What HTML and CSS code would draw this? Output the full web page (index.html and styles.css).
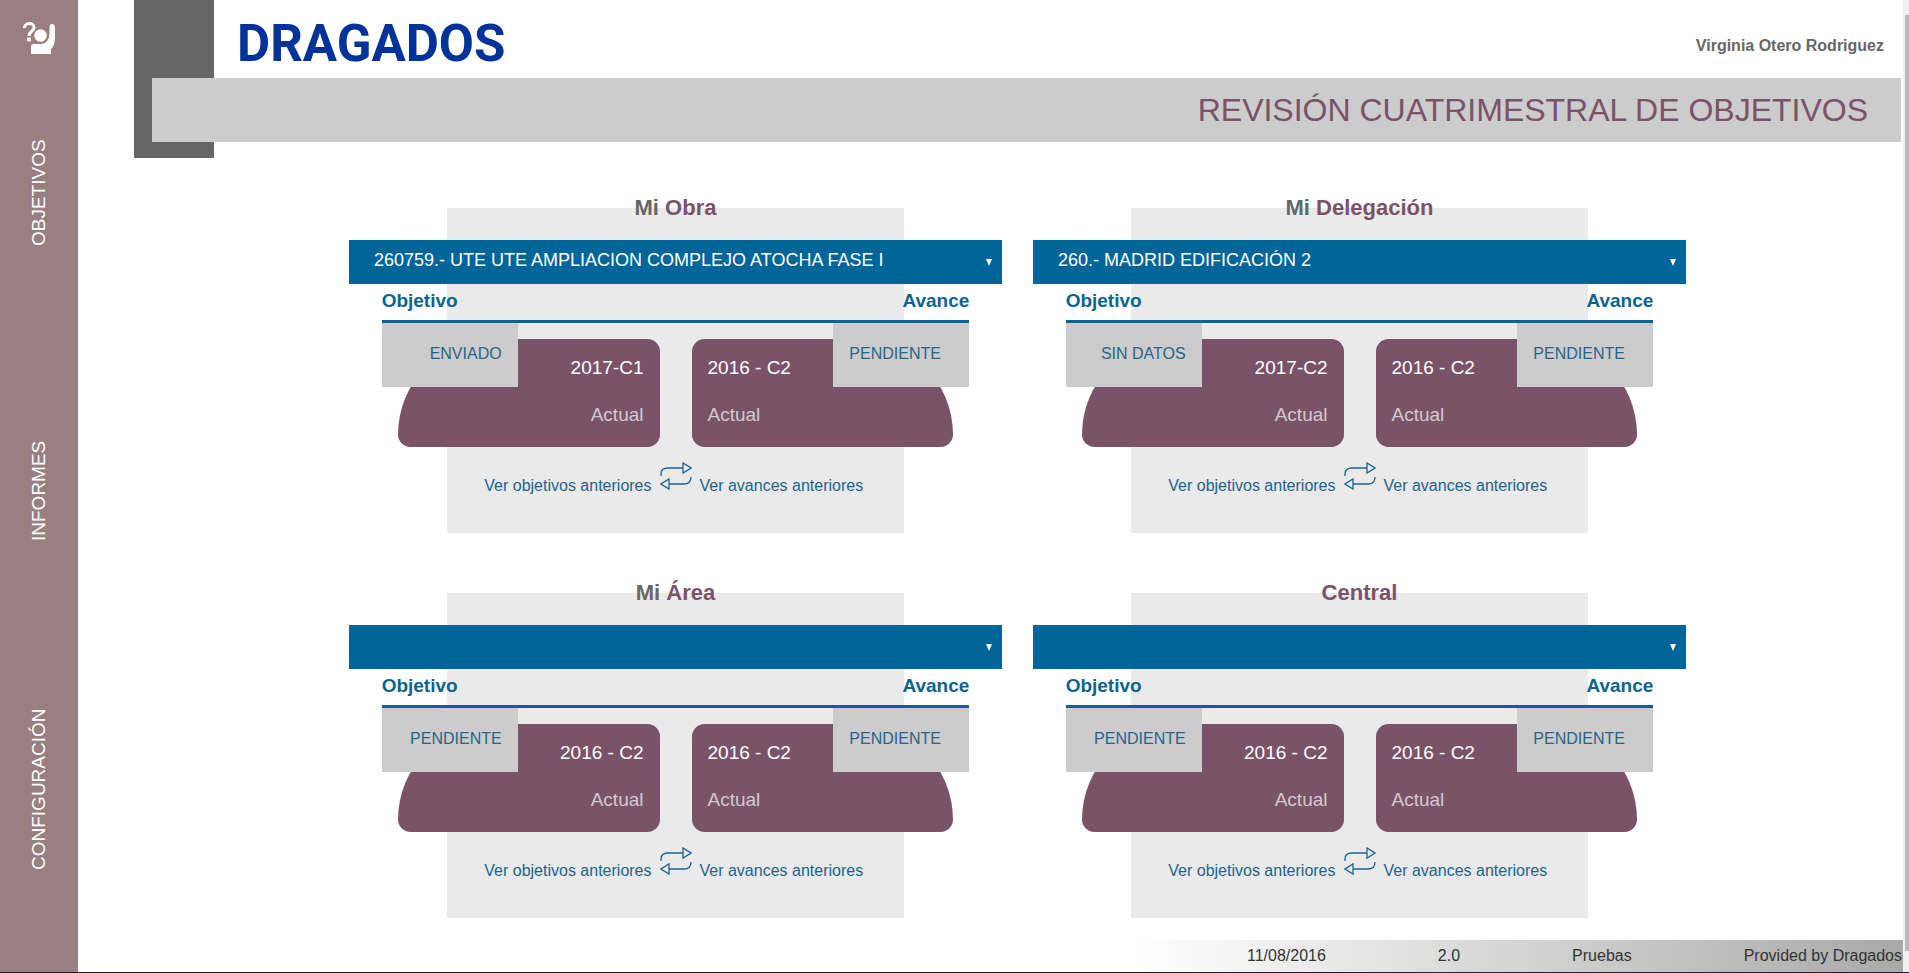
FILE: index.html
```html
<!DOCTYPE html>
<html lang="es">
<head>
<meta charset="utf-8">
<title>Revisión cuatrimestral de objetivos</title>
<link rel="stylesheet" href="styles.css">
</head>
<body>
<svg class="defs" aria-hidden="true">
  <symbol id="swap" viewBox="0 0 32 28">
    <path d="M1 14V12C1 8 4 6 8 6H23M23 1V11L31 6ZM31 15C31 19 29 22 24 22H9M9 17V27L1 22Z" fill="none" stroke="currentColor" stroke-width="1.3"/>
  </symbol>
</svg>
<div class="app">
  <nav class="sidebar">
    <button class="help" aria-label="Ayuda">
      <svg viewBox="0 0 32 32" width="32" height="32" aria-hidden="true">
        <path d="M1.500 6C1.500 0 11 0 11 5.500C11 9.500 6 9 6 14" fill="none" stroke="#fff" stroke-width="3"/>
        <rect x="4" y="15.500" width="4" height="4" rx="1" fill="#fff"/>
        <circle cx="17.500" cy="13.500" r="6.300" fill="#fff"/>
        <path d="M8 32V25Q8 22 11 22H19Q26 20 26.500 12V5Q26.500 2 29 2T32 5V17Q31 25 28 27V32Z" fill="#fff"/>
      </svg>
    </button>
    <button class="tab">OBJETIVOS</button>
    <button class="tab">INFORMES</button>
    <button class="tab">CONFIGURACIÓN</button>
  </nav>
  <div class="page">
    <header class="header">
      <div class="block"></div>
      <div class="top">
        <div class="logo">DRAGADOS</div>
        <div class="user">Virginia Otero Rodriguez</div>
      </div>
      <h1 class="banner">REVISIÓN CUATRIMESTRAL DE OBJETIVOS</h1>
    </header>
    <main class="cards">
      <section class="card">
        <h2 class="title">Mi <span class="accent">Obra</span></h2>
        <select class="picker" aria-label="Obra"><option>260759.- UTE UTE AMPLIACION COMPLEJO ATOCHA FASE I</option></select>
        <div class="heads"><span>Objetivo</span><span>Avance</span></div>
        <div class="panels">
          <div class="panel left"><div class="status">ENVIADO</div><div class="shape"><span>2017-C1</span><span class="now">Actual</span></div></div>
          <div class="panel right"><div class="status">PENDIENTE</div><div class="shape"><span>2016 - C2</span><span class="now">Actual</span></div></div>
        </div>
        <div class="links"><a href="#">Ver objetivos anteriores</a><svg class="swap" aria-hidden="true"><use href="#swap"/></svg><a href="#">Ver avances anteriores</a></div>
      </section>
      <section class="card">
        <h2 class="title">Mi <span class="accent">Delegación</span></h2>
        <select class="picker" aria-label="Delegación"><option>260.- MADRID EDIFICACIÓN 2</option></select>
        <div class="heads"><span>Objetivo</span><span>Avance</span></div>
        <div class="panels">
          <div class="panel left"><div class="status">SIN DATOS</div><div class="shape"><span>2017-C2</span><span class="now">Actual</span></div></div>
          <div class="panel right"><div class="status">PENDIENTE</div><div class="shape"><span>2016 - C2</span><span class="now">Actual</span></div></div>
        </div>
        <div class="links"><a href="#">Ver objetivos anteriores</a><svg class="swap" aria-hidden="true"><use href="#swap"/></svg><a href="#">Ver avances anteriores</a></div>
      </section>
      <section class="card">
        <h2 class="title">Mi <span class="accent">Área</span></h2>
        <select class="picker" aria-label="Área"><option></option></select>
        <div class="heads"><span>Objetivo</span><span>Avance</span></div>
        <div class="panels">
          <div class="panel left"><div class="status">PENDIENTE</div><div class="shape"><span>2016 - C2</span><span class="now">Actual</span></div></div>
          <div class="panel right"><div class="status">PENDIENTE</div><div class="shape"><span>2016 - C2</span><span class="now">Actual</span></div></div>
        </div>
        <div class="links"><a href="#">Ver objetivos anteriores</a><svg class="swap" aria-hidden="true"><use href="#swap"/></svg><a href="#">Ver avances anteriores</a></div>
      </section>
      <section class="card">
        <h2 class="title"><span class="accent">Central</span></h2>
        <select class="picker" aria-label="Central"><option></option></select>
        <div class="heads"><span>Objetivo</span><span>Avance</span></div>
        <div class="panels">
          <div class="panel left"><div class="status">PENDIENTE</div><div class="shape"><span>2016 - C2</span><span class="now">Actual</span></div></div>
          <div class="panel right"><div class="status">PENDIENTE</div><div class="shape"><span>2016 - C2</span><span class="now">Actual</span></div></div>
        </div>
        <div class="links"><a href="#">Ver objetivos anteriores</a><svg class="swap" aria-hidden="true"><use href="#swap"/></svg><a href="#">Ver avances anteriores</a></div>
      </section>
    </main>
    <footer class="footer"><span>11/08/2016</span><span>2.0</span><span>Pruebas</span><span>Provided by Dragados</span></footer>
  </div>
  <div class="scroll" aria-hidden="true"><div class="thumb"></div></div>
</div>
</body>
</html>
```
FILE: styles.css
```css
* { box-sizing: border-box; }
body {
  margin: 0;
  font: 16px/20px "Liberation Sans", Arial, sans-serif;
  color: #666;
  background: #fff;
}
button { border: 0; padding: 0; background: none; color: inherit; font: inherit; cursor: pointer; }
.defs { position: absolute; width: 0; height: 0; }
.app {
  display: flex;
  min-height: 100vh;
  border-bottom: 1px solid #1c2233;
}
.sidebar {
  flex: 0 0 78px;
  display: flex;
  flex-direction: column;
  align-items: center;
  padding: 22px 0 34px;
  background: #997f7f;
  color: #fff;
}
.help { height: 32px; margin-bottom: -10px; }
.help svg { display: block; }
.tab {
  flex: 1;
  writing-mode: vertical-rl;
  transform: rotate(180deg);
  font-size: 19px;
  line-height: 22px;
  text-align: center;
}
.page { flex: 1; display: flex; flex-direction: column; }

.header { position: relative; padding-right: 2px; }
.block {
  position: absolute;
  left: 56px;
  top: 0;
  width: 80px;
  height: 158px;
  background: #666;
}
.top {
  height: 78px;
  padding: 12px 17px 0 159px;
  display: flex;
  justify-content: space-between;
}
.logo {
  font: bold 51px/64px Roboto, "Liberation Sans", sans-serif;
  color: #039;
}
.user { padding-top: 24px; font-weight: bold; }
.banner {
  position: relative;
  margin: 0 0 0 74px;
  padding: 0 33px;
  font-size: 32px;
  font-weight: normal;
  line-height: 64px;
  text-align: right;
  color: #7a5369;
  background: #ccc;
}

.cards {
  display: grid;
  grid-template-columns: 1fr 1fr;
  gap: 49px 31px;
  width: 1337px;
  max-width: 74%;
  margin: 55px auto 0 271px;
}
.card {
  display: flex;
  flex-direction: column;
  height: 336px;
  background: linear-gradient(#eaeaea, #eaeaea) center bottom / 70% 325px no-repeat;
}
.title {
  margin: 0;
  font-size: 22px;
  line-height: 22px;
  text-align: center;
}
.accent { color: #7a5369; }
.picker {
  appearance: none;
  height: 44px;
  margin-top: 21px;
  padding: 0 25px 4px;
  border: 0;
  border-radius: 0;
  font: 18px "Liberation Sans", Arial, sans-serif;
  color: #fff;
  background: #069 url("data:image/svg+xml,%3Csvg xmlns='http://www.w3.org/2000/svg' width='6' height='7'%3E%3Cpath d='M0 0H6L3 7Z' fill='white'/%3E%3C/svg%3E") right 10px center no-repeat;
}
.heads {
  display: flex;
  justify-content: space-between;
  height: 39px;
  margin: 0 5%;
  padding-top: 5px;
  border-bottom: 3px solid #0a6490;
  font-size: 19px;
  font-weight: bold;
  line-height: 24px;
  color: #0a6490;
}
.panels {
  display: grid;
  grid-template-columns: 1fr 1fr;
  gap: 32px;
  margin: 0 5%;
}
.panel { position: relative; padding-top: 16px; }
.left { padding-left: 16px; text-align: right; }
.right { padding-right: 16px; }
.status {
  position: absolute;
  top: 0;
  width: 136px;
  height: 64px;
  padding: 0 16px;
  line-height: 62px;
  color: #286488;
  background: #ccc;
}
.left .status { left: 0; }
.right .status { right: 0; }
.shape {
  display: flex;
  flex-direction: column;
  gap: 23px;
  height: 108px;
  padding: 17px 16px;
  border-radius: 100px 13px 13px 13px;
  font-size: 19px;
  line-height: 24px;
  color: #fff;
  background: #7a5369;
}
.right .shape { border-radius: 13px 100px 13px 13px; }
.now { color: #d4c8cf; }
.links {
  display: grid;
  grid-template-columns: 1fr 32px 1fr;
  gap: 8px;
  padding-top: 15px;
}
.links a { padding-top: 14px; color: #1b6490; text-decoration: none; }
.links a:first-child { text-align: right; }
.swap { width: 32px; height: 28px; color: #1b6490; }

.footer {
  display: flex;
  justify-content: flex-end;
  gap: 112px;
  width: 42%;
  margin: auto 0 0 auto;
  padding-right: 1px;
  line-height: 32px;
  color: #333;
  background: linear-gradient(90deg, #fff, #a9a9a9);
}
.scroll { flex: 0 0 6px; padding: 15px 0 21px 2px; background: #f1f1f1; display: flex; }
.thumb { flex: 1; background: #bcbcbc; }
```
